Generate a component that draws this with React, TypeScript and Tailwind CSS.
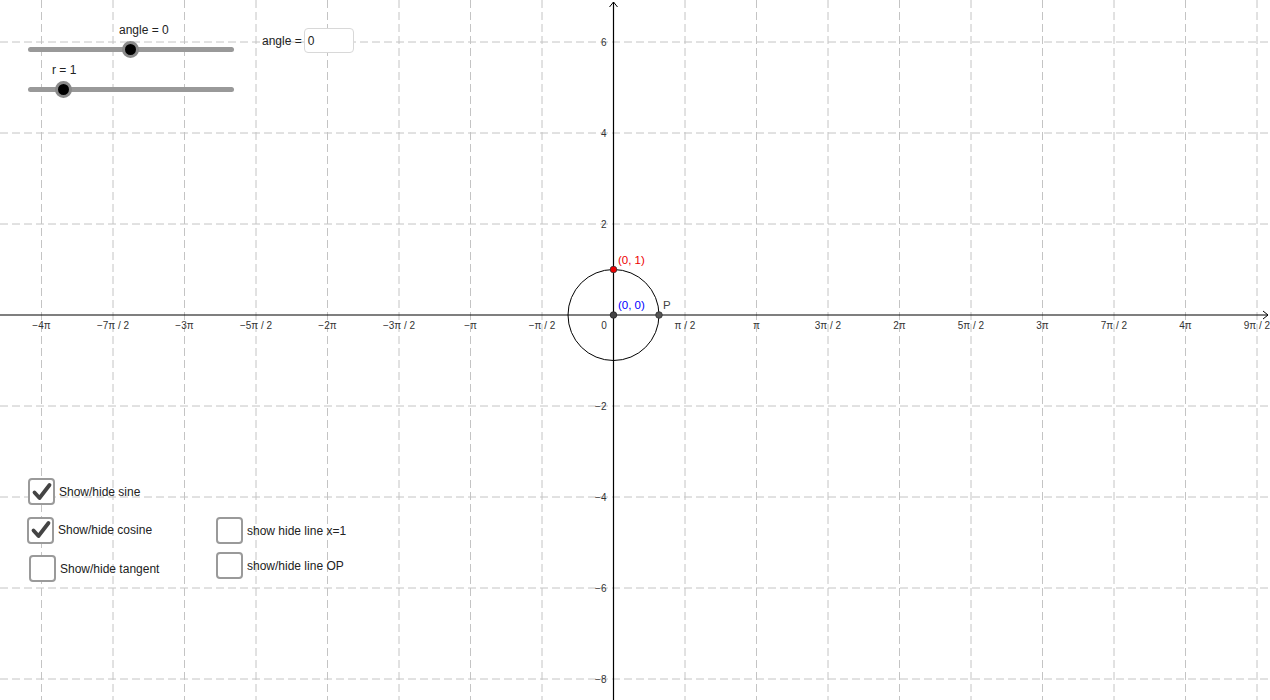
import React from "react";

const OX = 613.5;
const OY = 315;
const SX = 71.5; // px per π/2
const SY = 45.5; // px per unit

const xLabels: Record<number, string> = {
  [-8]: "−4π",
  [-7]: "−7π / 2",
  [-6]: "−3π",
  [-5]: "−5π / 2",
  [-4]: "−2π",
  [-3]: "−3π / 2",
  [-2]: "−π",
  [-1]: "−π / 2",
  1: "π / 2",
  2: "π",
  3: "3π / 2",
  4: "2π",
  5: "5π / 2",
  6: "3π",
  7: "7π / 2",
  8: "4π",
  9: "9π / 2",
};

const font = "'Liberation Sans', Arial, sans-serif";

function Graph() {
  const vKs = Array.from({ length: 18 }, (_, i) => i - 8).filter((k) => k !== 0);
  const hKs = [-8, -6, -4, -2, 2, 4, 6];
  return (
    <svg width={1270} height={700} className="absolute inset-0" style={{ fontFamily: font }}>
      {vKs.map((k) => (
        <line
          key={"v" + k}
          x1={OX + k * SX}
          x2={OX + k * SX}
          y1={0}
          y2={700}
          stroke="#c4c4c4"
          strokeWidth={1}
          strokeDasharray="8 4"
        />
      ))}
      {hKs.map((k) => (
        <line
          key={"h" + k}
          x1={0}
          x2={1270}
          y1={OY - k * SY}
          y2={OY - k * SY}
          stroke="#c4c4c4"
          strokeWidth={1}
          strokeDasharray="8 4"
        />
      ))}

      {/* axes */}
      <line x1={0} x2={1268} y1={OY} y2={OY} stroke="#000" strokeWidth={1.2} />
      <path d="M1263 311 L1268 315 L1263 319" fill="none" stroke="#000" strokeWidth={1} />
      <line x1={OX} x2={OX} y1={2} y2={700} stroke="#000" strokeWidth={1.2} />
      <path d="M609.5 7 L613.5 2 L617.5 7" fill="none" stroke="#000" strokeWidth={1} />

      {vKs.map((k) => (
        <text key={"xl" + k} x={OX + k * SX} y={329} fontSize={10} fill="#333" textAnchor="middle">
          {xLabels[k]}
        </text>
      ))}
      <text x={604} y={329} fontSize={10} fill="#333" textAnchor="middle">
        0
      </text>
      {hKs.map((k) => (
        <text key={"yl" + k} x={606.5} y={OY - k * SY + 3.5} fontSize={10} fill="#333" textAnchor="end">
          {k < 0 ? "−" + -k : k}
        </text>
      ))}

      {/* unit circle */}
      <circle cx={OX} cy={OY} r={SY} fill="none" stroke="#000" strokeWidth={1} />
      <circle cx={OX} cy={OY} r={3.3} fill="#444" stroke="#222" strokeWidth={0.8} />
      <circle cx={OX} cy={OY - SY} r={3.3} fill="#e00" stroke="#333" strokeWidth={0.8} />
      <circle cx={OX + SY} cy={OY} r={3.3} fill="#555" stroke="#333" strokeWidth={0.8} />
      <text x={618} y={264} fontSize={11.5} fill="#e00">
        (0, 1)
      </text>
      <text x={618} y={309} fontSize={11.5} fill="#00f">
        (0, 0)
      </text>
      <text x={663} y={309} fontSize={11.5} fill="#444">
        P
      </text>
    </svg>
  );
}

function Slider({ knob, label, labelLeft }: { knob: number; label: string; labelLeft: number }) {
  return (
    <div className="flex flex-col gap-[9.5px] w-[206px]">
      <div className="text-[12px] text-[#222] leading-[14px] whitespace-nowrap" style={{ paddingLeft: labelLeft }}>
        {label}
      </div>
      <div className="relative h-[5px] rounded-full bg-[#999]">
        <div
          className="absolute top-[-6px] w-[17px] h-[17px] rounded-full bg-black border-[3px] border-[#8a8a8a]"
          style={{ left: knob - 8.5 }}
        />
      </div>
    </div>
  );
}

function Check({ checked }: { checked?: boolean }) {
  return (
    <div className="w-[27px] h-[27px] rounded-[4px] border-2 border-[#9a9a9a] bg-white flex items-center justify-center shrink-0">
      {checked && (
        <svg width={22} height={22} viewBox="0 0 22 22">
          <path d="M3.5 11.5 L8.5 17 L18.5 4" fill="none" stroke="#444" strokeWidth={3.8} strokeLinecap="round" strokeLinejoin="round" />
        </svg>
      )}
    </div>
  );
}

function CheckRow({ checked, label, shift = 0 }: { checked?: boolean; label: string; shift?: number }) {
  return (
    <div className="flex items-center gap-[4px]" style={{ marginLeft: shift }}>
      <Check checked={checked} />
      <span className="text-[12px] text-[#222] whitespace-nowrap">{label}</span>
    </div>
  );
}

export default function App() {
  return (
    <div className="relative w-[1270px] h-[700px] bg-white overflow-hidden" style={{ fontFamily: font }}>
      <Graph />

      {/* sliders */}
      <div className="absolute left-[28px] top-[23px] flex flex-col gap-[11.5px]">
        <Slider knob={102} label="angle = 0" labelLeft={91} />
        <Slider knob={35} label="r = 1" labelLeft={24} />
      </div>

      {/* input box */}
      <div className="absolute left-[262px] top-[28px] flex items-center gap-[2px]">
        <span className="text-[12px] text-[#222]">angle =</span>
        <div className="w-[50px] h-[25px] rounded-[4px] border border-[#d8d8d8] bg-white flex items-center pl-[3px] text-[12px] text-[#222]">
          0
        </div>
      </div>

      {/* checkboxes */}
      <div className="absolute left-[27px] top-[478px] flex flex-col gap-[11.5px]">
        <CheckRow checked label="Show/hide sine" shift={1} />
        <CheckRow checked label="Show/hide cosine" />
        <CheckRow label="Show/hide tangent" shift={2} />
      </div>
      <div className="absolute left-[216px] top-[517px] flex flex-col gap-[8px]">
        <CheckRow label="show hide line x=1" />
        <CheckRow label="show/hide line OP" />
      </div>
    </div>
  );
}
